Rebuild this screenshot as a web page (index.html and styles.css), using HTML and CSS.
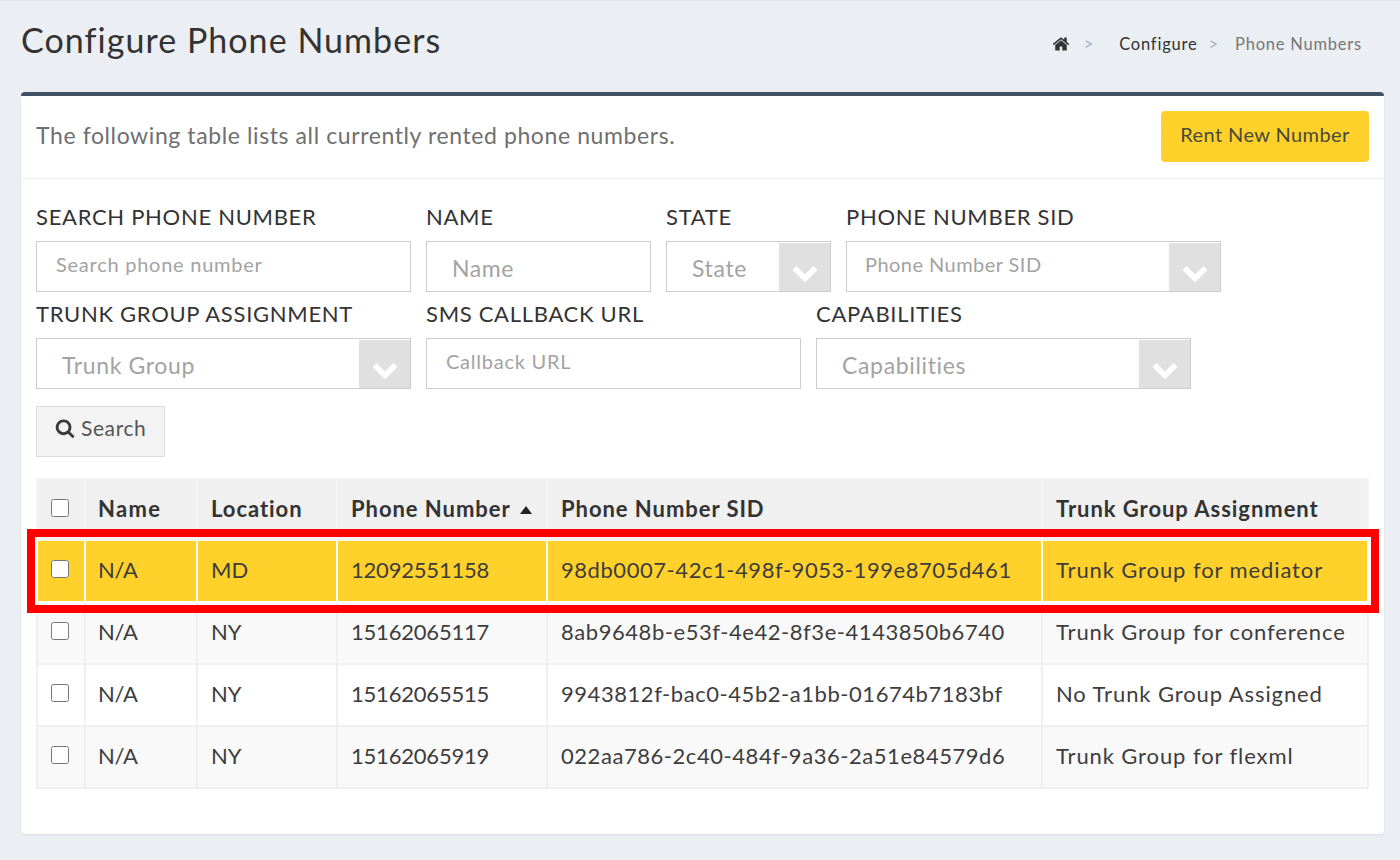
FILE: index.html
```html
<!DOCTYPE html>
<html lang="en">
<head>
<meta charset="utf-8">
<title>Configure Phone Numbers</title>
<link rel="stylesheet" href="styles.css">
</head>
<body>
<header class="page-head">
  <h1>Configure Phone Numbers</h1>
  <nav class="crumbs">
    <svg class="home" viewBox="0 0 1792 1792"><path d="M1472 992v480q0 26-19 45t-45 19h-384v-384h-256v384h-384q-26 0-45-19t-19-45v-480q0-1 .5-3t.5-3l575-474 575 474q1 2 1 6zm223-69l-62 74q-8 9-21 11h-3q-13 0-21-7l-692-577-692 577q-12 8-24 7-13-2-21-11l-62-74q-8-10-7-23.500t11-21.500l719-599q32-26 76-26t76 26l244 204v-195q0-14 9-23t23-9h192q14 0 23 9t9 23v408l219 182q10 8 11 21.500t-7 23.500z"/></svg>
    <span class="sep sep-a">&gt;</span>
    <span class="crumb">Configure</span>
    <span class="sep sep-b">&gt;</span>
    <span class="crumb current">Phone Numbers</span>
  </nav>
</header>
<main class="card">
  <div class="card-head">
    <p>The following table lists all currently rented phone numbers.</p>
    <button class="rent" type="button">Rent New Number</button>
  </div>
  <div class="card-body">
    <form class="filters">
      <div class="field w375"><label>SEARCH PHONE NUMBER</label><input class="input" placeholder="Search phone number"></div>
      <div class="field w225"><label>NAME</label><input class="input big" placeholder="Name"></div>
      <div class="field w165"><label>STATE</label><div class="select"><span>State</span><i class="arrow"><svg viewBox="0 0 26 18"><path d="M2.500 4L13 14.500 23.500 4"/></svg></i></div></div>
      <div class="field w375"><label>PHONE NUMBER SID</label><div class="select small"><span>Phone Number SID</span><i class="arrow"><svg viewBox="0 0 26 18"><path d="M2.500 4L13 14.500 23.500 4"/></svg></i></div></div>
      <div class="break"></div>
      <div class="field w375"><label>TRUNK GROUP ASSIGNMENT</label><div class="select"><span>Trunk Group</span><i class="arrow"><svg viewBox="0 0 26 18"><path d="M2.500 4L13 14.500 23.500 4"/></svg></i></div></div>
      <div class="field w375"><label>SMS CALLBACK URL</label><input class="input" placeholder="Callback URL"></div>
      <div class="field w375"><label>CAPABILITIES</label><div class="select"><span>Capabilities</span><i class="arrow"><svg viewBox="0 0 26 18"><path d="M2.500 4L13 14.500 23.500 4"/></svg></i></div></div>
    </form>
    <button class="search" type="button"><svg viewBox="0 0 1792 1792"><path d="M1216 832q0-185-131.500-316.500t-316.500-131.500-316.500 131.500-131.500 316.500 131.500 316.500 316.500 131.500 316.500-131.500 131.500-316.500zm512 832q0 52-38 90t-90 38q-54 0-90-38l-343-342q-179 124-399 124-143 0-273.500-55.500t-225-150-150-225-55.500-273.500 55.500-273.500 150-225 225-150 273.500-55.500 273.500 55.500 225 150 150 225 55.500 273.500q0 220-124 399l343 343q37 37 37 90z"/></svg>Search</button>
    <div class="table-wrap">
      <table>
        <thead>
          <tr><th class="c-check"><input type="checkbox"></th><th class="c-name">Name</th><th class="c-loc">Location</th><th class="c-num">Phone Number <span class="sort"></span></th><th class="c-sid">Phone Number SID</th><th>Trunk Group Assignment</th></tr>
        </thead>
        <tbody>
          <tr class="hit"><td><input type="checkbox"></td><td>N/A</td><td>MD</td><td>12092551158</td><td>98db0007-42c1-498f-9053-199e8705d461</td><td>Trunk Group for mediator</td></tr>
          <tr><td><input type="checkbox"></td><td>N/A</td><td>NY</td><td>15162065117</td><td>8ab9648b-e53f-4e42-8f3e-4143850b6740</td><td>Trunk Group for conference</td></tr>
          <tr><td><input type="checkbox"></td><td>N/A</td><td>NY</td><td>15162065515</td><td>9943812f-bac0-45b2-a1bb-01674b7183bf</td><td>No Trunk Group Assigned</td></tr>
          <tr><td><input type="checkbox"></td><td>N/A</td><td>NY</td><td>15162065919</td><td>022aa786-2c40-484f-9a36-2a51e84579d6</td><td>Trunk Group for flexml</td></tr>
        </tbody>
      </table>
      <div class="redbox"></div>
    </div>
  </div>
</main>
</body>
</html>
```
FILE: styles.css
```css
* { box-sizing: border-box; }
html, body { margin: 0; height: 860px; overflow: hidden; }
body {
  background: #ebeef3;
  border-top: 1px solid #e3e5e9;
  font-family: "Lato", "Open Sans", sans-serif;
  color: #3a3a3a;
  padding: 0 16px 0 21px;
}
.page-head { display: flex; justify-content: space-between; height: 91px; }
h1 { margin: 19px 0 0; font-size: 34px; line-height: 40px; font-weight: 400; color: #333; letter-spacing: 1.05px; }
.crumbs { display: flex; align-items: center; height: 30px; margin: 28px 22px 0 0; font-size: 16.500px; letter-spacing: .78px; color: #333; }
.home { width: 18px; height: 18px; fill: #333; margin-right: 14px; }
.sep { color: #a9adb5; letter-spacing: 0; }
.sep-a { margin-right: 26px; }
.sep-b { margin: 0 17px 0 11px; }
.current { color: #777; }
.card {
  height: 742px;
  background: #fff;
  border-top: 4px solid #3f5364;
  border-radius: 4px;
  box-shadow: 0 1px 2px rgba(0,0,0,.08);
}
.card-head {
  display: flex; justify-content: space-between; align-items: center;
  height: 83px; padding: 0 15px 2px; border-bottom: 1px solid #f2f2f2;
}
.card-head p { margin: 0 0 2px; font-size: 23px; letter-spacing: .6px; color: #6f6f6f; }
.rent {
  width: 208px; height: 51px; padding: 0 0 5px; border: 0; border-radius: 4px;
  background: #ffd12a; color: #4a4a3a;
  font: 400 20px "Lato", sans-serif; letter-spacing: .4px;
}
.card-body { padding: 24px 15px 0; }
.filters { display: flex; flex-wrap: wrap; column-gap: 15px; }
.break { flex-basis: 100%; height: 0; }
.field { margin-bottom: 8px; }
.field label { display: block; height: 38px; padding-top: 1px; font-size: 22px; line-height: 26px; letter-spacing: .7px; color: #333; }
.w375 { width: 375px; }
.w225 { width: 225px; }
.w165 { width: 165px; }
.input {
  display: block; width: 100%; height: 51px; padding: 0 19px 6px;
  border: 1px solid #ccc; background: #fff;
  font: 400 20px "Lato", sans-serif; letter-spacing: .75px; color: #333; outline: 0;
}
.input::placeholder { color: #a3a3a3; opacity: 1; }
.input.big { font-size: 23px; letter-spacing: .6px; padding: 2px 25px 0; }
.select {
  display: flex; justify-content: space-between; height: 51px;
  border: 1px solid #ccc; padding: 1px 0 0 25px; background: #fff;
  font-size: 23px; letter-spacing: .65px; color: #a3a3a3; line-height: 51px;
}
.select.small { font-size: 20px; letter-spacing: .45px; padding-left: 18px; line-height: 42px; }
.arrow { display: flex; align-items: center; justify-content: center; width: 51px; height: 48px; background: #e0e0e0; padding-top: 12px; }
.arrow svg { width: 26px; height: 18px; fill: none; stroke: #fff; stroke-width: 5.500; }
.search {
  display: flex; align-items: center; gap: 6px;
  width: 129px; height: 51px; margin-top: 9px; padding: 0 0 8px 18px;
  background: #f3f3f3; border: 1px solid #ddd;
  font: 400 21px "Lato", sans-serif; letter-spacing: .6px; color: #555;
}
.search svg { width: 20px; height: 20px; fill: #3a3a3a; }
.table-wrap { position: relative; margin: 21px 0 0; width: 1333px; }
table { width: 100%; border-collapse: collapse; table-layout: fixed; font-size: 22px; color: #3d3d3d; }
th, td { height: 62px; padding: 0 13px 4px; border: 2px solid #f0f0f0; text-align: left; white-space: nowrap; }
th { height: 61px; padding-bottom: 3px; background: #f0f0f0; border-color: #f4f4f4; font-size: 22px; font-weight: 700; letter-spacing: .95px; color: #333; }
td:nth-child(2) { letter-spacing: -.3px; padding-left: 12px; }
td:nth-child(4) { letter-spacing: -.2px; }
td:nth-child(5) { letter-spacing: .55px; }
td:nth-child(6) { letter-spacing: .9px; }
tbody tr:nth-child(even) { background: #f9f9f9; }
tr.hit { background: #ffd12a; }
tr.hit td { border-color: #fff; }
.c-check { width: 48px; }
.c-name { width: 112px; padding-left: 12px; letter-spacing: 1.300px; }
.c-loc { width: 140px; }
.c-num { width: 210px; }
.c-sid { width: 495px; }
input[type="checkbox"] { width: 18px; height: 18px; margin: 0; display: block; }
.sort { display: inline-block; width: 0; height: 0; margin: 0 0 3px 4px; border: 6px solid transparent; border-top: 0; border-bottom: 8px solid #222; }
.redbox { position: absolute; left: -9px; top: 51px; width: 1352px; height: 84px; border: 8px solid #f00; pointer-events: none; }
```
